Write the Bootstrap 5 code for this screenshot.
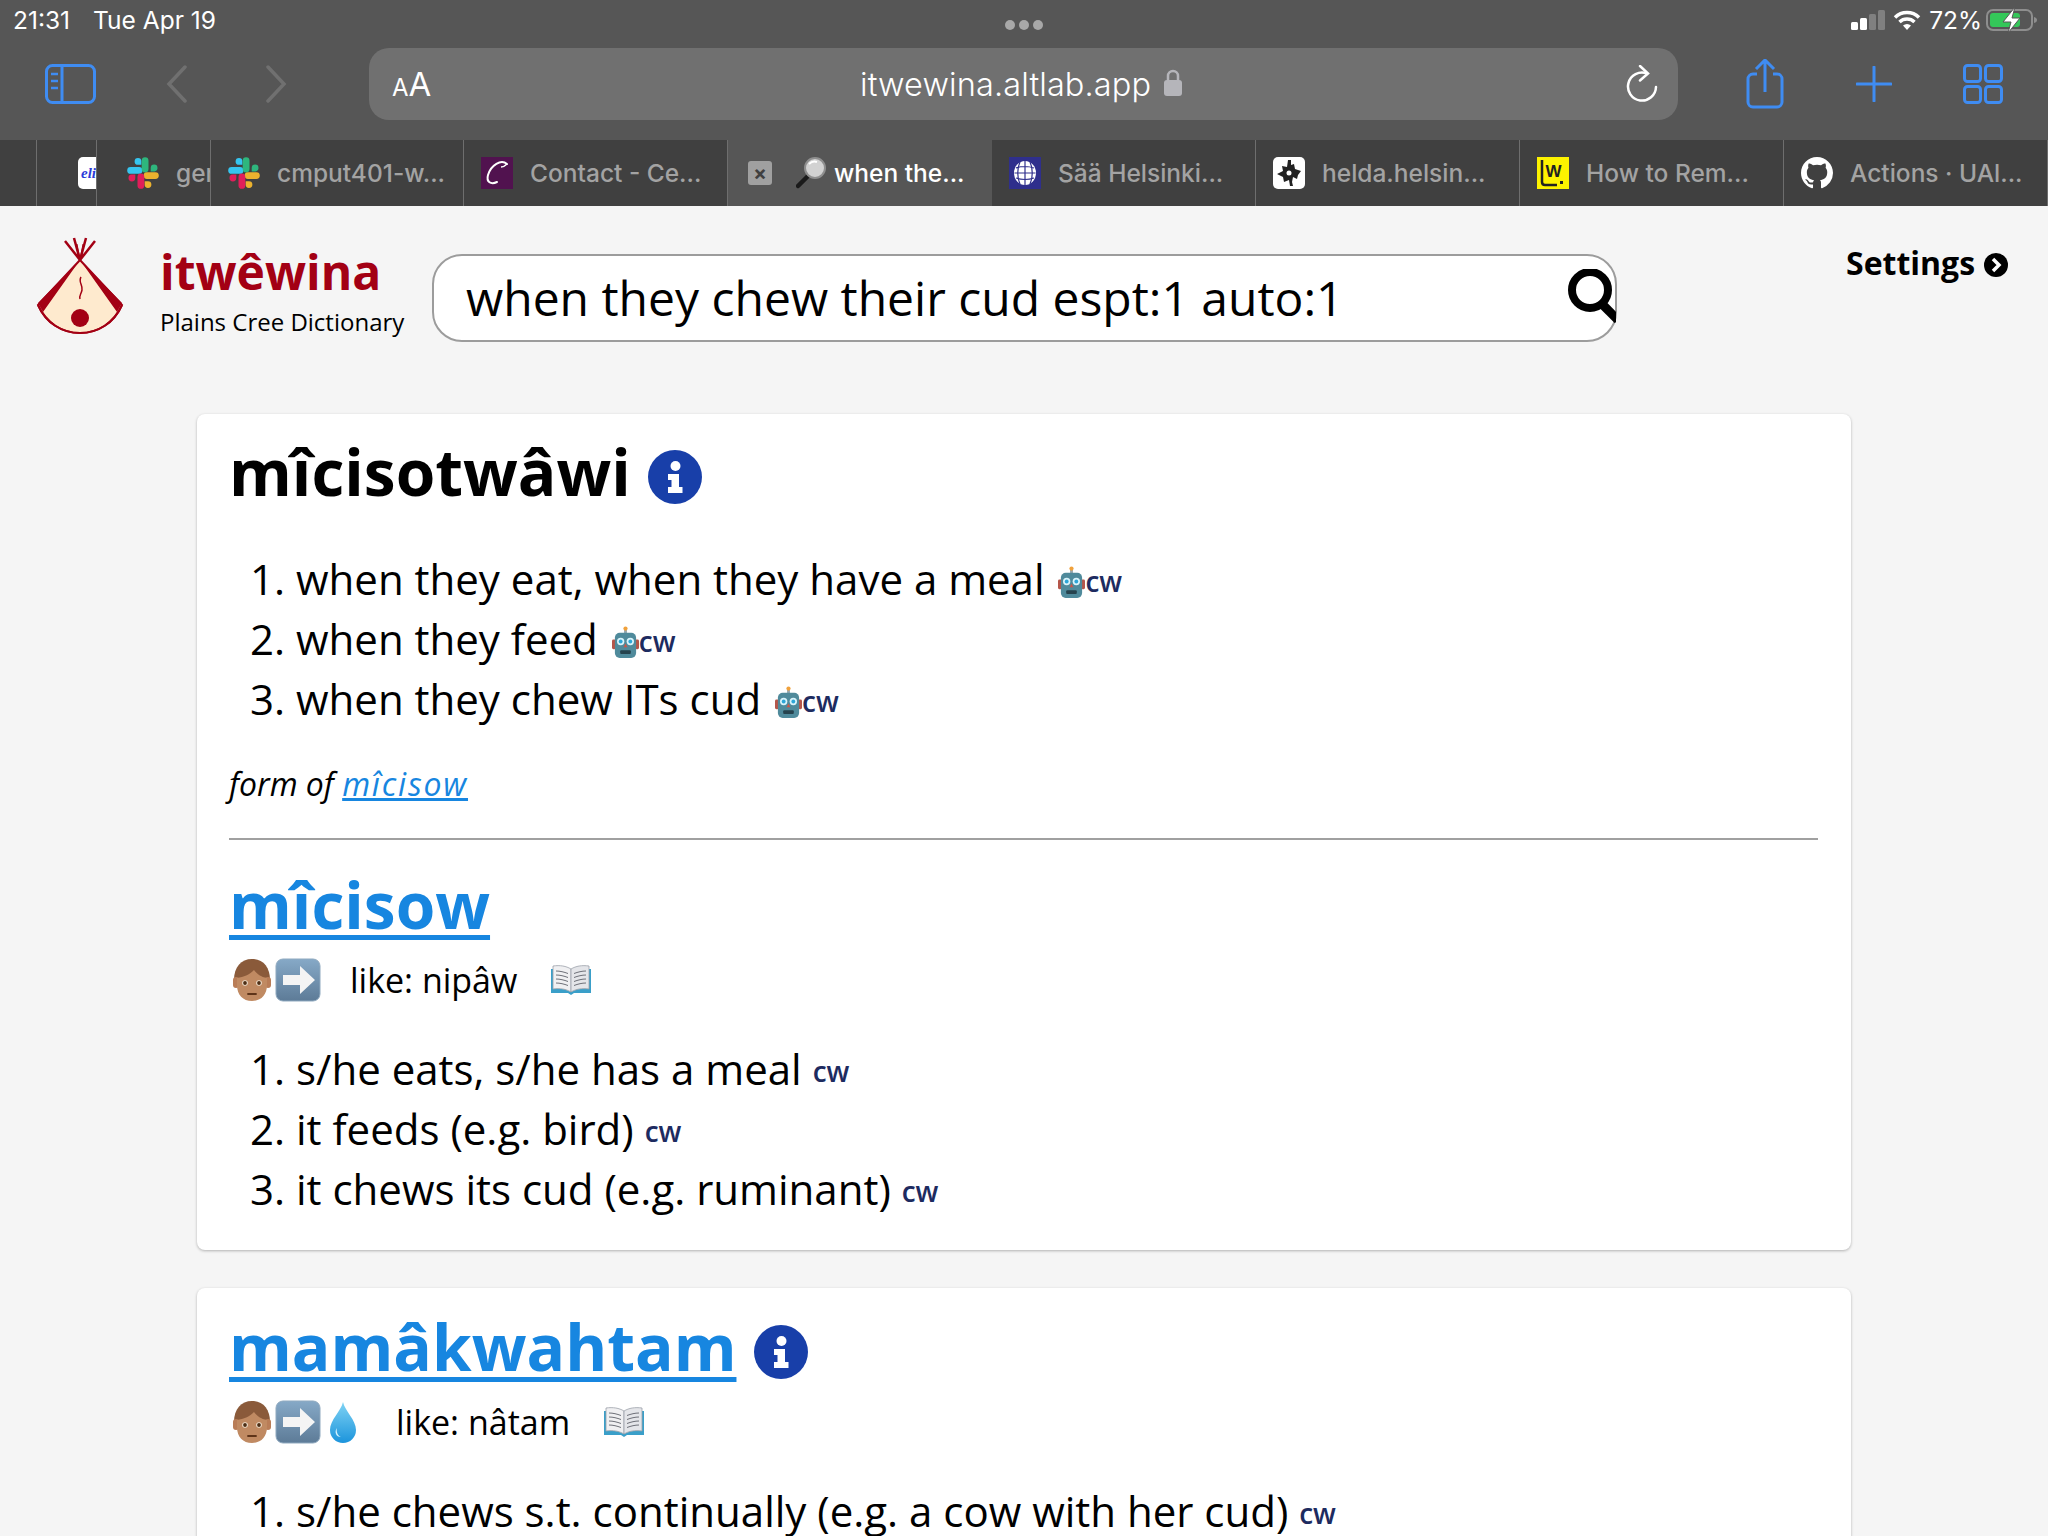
<!DOCTYPE html>
<html lang="en">
<head>
<meta charset="UTF-8">
<meta name="viewport" content="width=device-width, initial-scale=1.0">
<title>itwêwina</title>
<link href="https://cdn.jsdelivr.net/npm/bootstrap@5.3.3/dist/css/bootstrap.min.css" rel="stylesheet">
<style>
html, body { height: 1536px; overflow: hidden; }
body { background: #f5f5f5; font-family: "Open Sans", "Liberation Sans", sans-serif; color: #000; }
.chrome { background: #565656; font-family: Inter, "Liberation Sans", sans-serif; }
.status-bar { height: 48px; color: #fff; font-size: 24.500px; padding: 0 10px 8px 13px; position: relative; }
.status-bar .st-time { margin-right: 23px; }
.dots { position: absolute; left: 1005px; top: 20px; gap: 4px; }
.dots span { width: 10px; height: 10px; border-radius: 50%; background: #a8a8a8; }
.toolbar { height: 92px; padding-bottom: 20px; }
.tool-side { margin-left: 45px; }
.tool-back { margin-left: 70px; }
.tool-fwd { margin-left: 79px; }
.url-bar { margin-left: 82px; width: 1309px; height: 72px; background: #707070; border-radius: 20px; position: relative; color: #fff; padding: 0 20px 0 23px; }
.url-aa { font-size: 33px; line-height: 1; width: 40px; }
.url-aa small { font-size: 24px; }
.url-host { position: absolute; left: 491px; top: 15px; font-size: 32.500px; line-height: 44px; font-weight: 300; letter-spacing: .1px; }
.url-lock { position: absolute; left: 795px; top: 21px; }
.tool-share { margin-left: 68px; }
.tool-plus { margin-left: 72px; }
.tool-tabs { margin-left: 71px; }
.tabstrip { height: 66px; background: #404040; color: #a3a3a3; font-size: 24.500px; font-weight: 500; }
.tabcell { flex: none; width: 264px; height: 66px; padding-left: 17px; border-right: 1px solid #6e6e6e; overflow: hidden; white-space: nowrap; gap: 17px; }
.tabcell svg { flex: none; }
.tab-0 { width: 37px; padding: 0; }
.tab-1 { width: 60px; padding-left: 41px; }
.tab-2 { width: 114px; gap: 17px; padding-left: 30px; }
.tab-3 { width: 253px; }
.tab-on { background: #565656; color: #fff; border-right: 0; padding-left: 20px; gap: 0; width: 264px; }
.tab-on .tab-x { width: 24px; height: 24px; background: #a0a0a0; color: #404040; font-size: 20px; line-height: 24px; text-align: center; border-radius: 3px; margin-right: 24px; font-weight: 700; }
.tab-on svg { margin-right: 8px; }
.site-head { height: 208px; position: relative; padding: 0; }
.logo-box { margin: 30px 0 0 36px; }
.brand-box { margin: 32px 0 0 36px; width: 272px; }
.brand-name { color: #a30014; font-weight: 700; font-size: 48px; line-height: 68px; }
.brand-sub { font-size: 24px; line-height: 32px; }
.search-box { margin: 48px 0 0 0; width: 1185px; height: 88px; border: 2px solid #9c9c9c; border-radius: 30px; background: #fff; padding-left: 32px; position: relative; font-size: 48px; line-height: 84px; }
.search-ic { position: absolute; right: -1px; top: 13px; }
.settings-link { position: absolute; left: 1846px; top: 35px; font-weight: 700; font-size: 32px; line-height: 44px; gap: 9px; color: #000; text-decoration: none; }
.entry { margin: 0 197px; border: 0; border-radius: 8px; background: #fff; box-shadow: 0 1px 3px rgba(0,0,0,.28); padding: 0 33px 0 32px; }
.entry + .entry { margin-top: 38px; }
.entry-1 { height: 836px; }
.entry-2 { height: 400px; }
.word { font-size: 64px; font-weight: 700; line-height: 87px; margin: 0; gap: 17px; }
.word a, .form-note a { color: #1786e0; }
.word a { text-decoration-thickness: 5px; text-underline-offset: 6px; }
.info-ic { margin-top: 11px; }
.first-word { padding-top: 14px; }
.senses { font-size: 42px; line-height: 60px; margin: 0; padding-left: 67px; }
.senses li { white-space: nowrap; }
.senses svg { vertical-align: -4px; margin-left: 3px; }
.cw-tag { color: #1d2b60; font-size: 28px; font-weight: 600; line-height: 1; vertical-align: 3px; }
.senses-a { margin-top: 34px; }
.senses-b { margin-top: 34px; }
.form-note { font-style: italic; font-size: 32px; line-height: 46px; margin: 32px 0 0 0; }
.form-note a { letter-spacing: 1.800px; text-decoration-thickness: 3px; }
.rule { height: 2px; background: #a0a0a0; margin: 31px 0 0 0; }
.word-second { margin-top: 21px; }
.meta-row { height: 50px; font-size: 34px; gap: 0; margin-top: 7px; }
.meta-like { margin-left: 29px; margin-right: 31px; }
.meta-row svg { flex: none; margin-left: 2px; }
.person-ic { margin-left: 3px !important; }
.arrow-ic { margin-left: 3px !important; }
.meta-row .drop-ic { margin-left: 8px; }
.drop-ic + .meta-like { margin-left: 39px; }
.word-third { padding-top: 15px; }
.word-third .word-gap { margin-left: 1px; }
</style>
</head>
<body>
<svg width="0" height="0" class="position-absolute" aria-hidden="true">
  <defs>
    <linearGradient id="bluebox" x1="0" y1="0" x2="0" y2="1"><stop offset="0" stop-color="#86a9c7"/><stop offset="1" stop-color="#5d7b97"/></linearGradient>
    <linearGradient id="dropg" x1="0" y1="0" x2="0" y2="1"><stop offset="0" stop-color="#7fd3f4"/><stop offset="1" stop-color="#1c94dc"/></linearGradient>
    <symbol id="sl" viewBox="0 0 32 32">
      <path d="M11 1a3.4 3.4 0 0 0 0 6.8h3.4V4.4A3.4 3.4 0 0 0 11 1zM3.6 10a3.4 3.4 0 0 0 0 6.8H12A3.4 3.4 0 0 0 12 10z" fill="#36c5f0"/>
      <path d="M29 11a3.4 3.4 0 0 0-6.8 0v3.4H26A3.4 3.4 0 0 0 29 11zM20 3.6a3.4 3.4 0 0 0-6.8 0V12a3.4 3.4 0 0 0 6.8 0z" fill="#2eb67d" transform="translate(1.5 0)"/>
      <path d="M21 31a3.4 3.4 0 0 0 0-6.8h-3.4v3.4A3.4 3.4 0 0 0 21 31zM28.4 22a3.4 3.4 0 0 0 0-6.8H20a3.4 3.4 0 0 0 0 6.8z" fill="#ecb22e"/>
      <path d="M3 21a3.4 3.4 0 0 0 6.8 0v-3.4H6A3.4 3.4 0 0 0 3 21zM12 28.4a3.4 3.4 0 0 0 6.8 0V20a3.4 3.4 0 0 0-6.8 0z" fill="#e01e5a" transform="translate(-1.5 0)"/>
    </symbol>
    <symbol id="robot" viewBox="0 0 28 34">
      <rect x="12.500" y="2" width="3" height="6" fill="#9aa7ad"/><circle cx="14" cy="2.500" r="2.200" fill="#f0a13c"/>
      <rect x="0" y="14" width="4" height="10" rx="1.500" fill="#b5564a"/><rect x="24" y="14" width="4" height="10" rx="1.500" fill="#b5564a"/>
      <path d="M3 12a5 5 0 0 1 5-5h12a5 5 0 0 1 5 5v16a5 5 0 0 1-5 5H8a5 5 0 0 1-5-5z" fill="#4f8a9b"/>
      <circle cx="9" cy="16" r="3.800" fill="#d9f3fa"/><circle cx="19" cy="16" r="3.800" fill="#d9f3fa"/>
      <circle cx="9" cy="16" r="2" fill="#2da6d8"/><circle cx="19" cy="16" r="2" fill="#2da6d8"/>
      <path d="M14 18l2 4h-4z" fill="#c9574a"/><rect x="8.500" y="25" width="11" height="4" rx="1" fill="#26434e"/>
    </symbol>
    <symbol id="person" viewBox="0 0 40 44">
      <path d="M2 22C2 9 9 1 20 1s18 8 18 21v5H2z" fill="#8a5a3a"/>
      <rect x="1" y="19" width="6" height="11" rx="3" fill="#b97d57"/><rect x="33" y="19" width="6" height="11" rx="3" fill="#b97d57"/>
      <path d="M5 20c7-1 12-3 17-8 3 4 7 7 13 8v7c0 10-6 16-15 16S5 37 5 27z" fill="#c08a62"/>
      <circle cx="13" cy="25" r="2.800" fill="#f3e7d7"/><circle cx="27" cy="25" r="2.800" fill="#f3e7d7"/>
      <circle cx="13" cy="25" r="1.900" fill="#4d2e14"/><circle cx="27" cy="25" r="1.900" fill="#4d2e14"/>
      <path d="M16 36h8" stroke="#5e3419" stroke-width="1.800" stroke-linecap="round"/>
    </symbol>
    <symbol id="arrowbox" viewBox="0 0 46 44">
      <rect x="1" y="1" width="44" height="42" rx="7" fill="url(#bluebox)" stroke="#8fa9bf" stroke-width="1"/>
      <path d="M8 17h17V8l15 14-15 14v-9H8z" fill="#f4f4f4"/>
    </symbol>
    <symbol id="book" viewBox="0 0 42 32">
      <path d="M1 5h40v24H24l-3 2-3-2H1z" fill="#3a9fc9"/>
      <path d="M3 2c7-1 13 0 18 3v23c-5-3-11-4-18-3z" fill="#f0f0f2" stroke="#9aa0a8" stroke-width=".8"/>
      <path d="M39 2c-7-1-13 0-18 3v23c5-3 11-4 18-3z" fill="#e4e5e9" stroke="#9aa0a8" stroke-width=".8"/>
      <path d="M6 7c4 0 8 1 12 2.500M6 11c4 0 8 1 12 2.500M6 15c4 0 8 1 12 2.500M6 19c4 0 8 1 12 2.500M36 7c-4 0-8 1-12 2.500M36 11c-4 0-8 1-12 2.500M36 15c-4 0-8 1-12 2.500M36 19c-4 0-8 1-12 2.500" stroke="#6e7078" stroke-width="1" fill="none"/>
    </symbol>
    <symbol id="drop" viewBox="0 0 28 42">
      <path d="M14 1c2 9 13 18 13 28a13 13 0 0 1-26 0C1 19 12 10 14 1z" fill="url(#dropg)"/>
      <path d="M8 27c-1 4 1 8 4 9-5 0-7-5-4-9z" fill="#d5f2fc"/>
    </symbol>
    <symbol id="info" viewBox="0 0 54 54">
      <circle cx="27" cy="27" r="27" fill="#183fa9"/>
      <circle cx="27.500" cy="16" r="5" fill="#fff"/>
      <path d="M20 24h11v13h3.500v6H20v-6h3.500v-7H20z" fill="#fff"/>
    </symbol>
  </defs>
</svg>

<div class="chrome">
  <div class="status-bar d-flex align-items-center justify-content-between">
    <div><span class="st-time">21:31</span><span>Tue Apr 19</span></div>
    <div class="dots d-flex"><span></span><span></span><span></span></div>
    <div class="d-flex align-items-center">
      <svg width="34" height="22" viewBox="0 0 34 22" class="me-2"><rect x="0" y="13" width="7" height="8" rx="1.500" fill="#fff"/><rect x="9" y="9" width="7" height="12" rx="1.500" fill="#fff"/><rect x="18" y="5" width="7" height="16" rx="1.500" fill="#808080"/><rect x="27" y="1" width="7" height="20" rx="1.500" fill="#808080"/></svg>
      <svg width="28" height="22" viewBox="0 0 28 22" class="me-2"><path d="M2 8.500a17 17 0 0 1 24 0M6.500 13a11 11 0 0 1 15 0" fill="none" stroke="#fff" stroke-width="3.500"/><path d="M10 16.500a6 6 0 0 1 8 0L14 21z" fill="#fff"/></svg>
      <span class="me-1">72%</span>
      <svg width="52" height="26" viewBox="0 0 52 26"><rect x="1" y="3" width="45" height="20" rx="6" fill="none" stroke="#8e8e8e" stroke-width="2"/><rect x="4" y="6" width="30" height="14" rx="3" fill="#34c759"/><path d="M48 10c2 .5 3 1.500 3 3s-1 2.500-3 3z" fill="#8e8e8e"/><path d="M29 0 17 15h8l-3 11 12-15h-8z" fill="#fff" stroke="#565656" stroke-width="1"/></svg>
    </div>
  </div>
  <div class="toolbar d-flex align-items-center">
    <svg class="tool-side" width="51" height="40" viewBox="0 0 51 40"><rect x="1.500" y="1.500" width="48" height="37" rx="6" fill="none" stroke="#3f8cf2" stroke-width="3"/><path d="M17 2v36" stroke="#3f8cf2" stroke-width="3"/><path d="M6 10h7M6 17h7M6 24h7" stroke="#3f8cf2" stroke-width="2.500"/></svg>
    <svg class="tool-back" width="21" height="38" viewBox="0 0 21 38"><path d="M19 2 3 19l16 17" fill="none" stroke="#707070" stroke-width="3.500" stroke-linecap="round"/></svg>
    <svg class="tool-fwd" width="21" height="38" viewBox="0 0 21 38"><path d="M2 2l16 17L2 36" fill="none" stroke="#707070" stroke-width="3.500" stroke-linecap="round"/></svg>
    <div class="url-bar d-flex align-items-center justify-content-between">
      <div class="url-aa"><small>A</small>A</div>
      <div class="url-host">itwewina.altlab.app</div>
      <svg class="url-lock" width="18" height="27" viewBox="0 0 18 27"><rect x="0" y="11" width="18" height="16" rx="3" fill="#b5b5ba"/><path d="M4 12V7a5 5 0 0 1 10 0v5" fill="none" stroke="#b5b5ba" stroke-width="2.500"/></svg>
      <svg width="32" height="38" viewBox="0 0 32 38"><path d="M21 8.500A14 14 0 1 0 30 22" fill="none" stroke="#fff" stroke-width="2.500" stroke-linecap="round"/><path d="M14 1l8 7.500-8 7" fill="none" stroke="#fff" stroke-width="2.500" stroke-linecap="round"/></svg>
    </div>
    <svg class="tool-share" width="38" height="50" viewBox="0 0 38 50"><path d="M11 15H7a5 5 0 0 0-5 5v23a5 5 0 0 0 5 5h24a5 5 0 0 0 5-5V20a5 5 0 0 0-5-5h-4" fill="none" stroke="#3f8cf2" stroke-width="3"/><path d="M19 33V2M10 10l9-9 9 9" fill="none" stroke="#3f8cf2" stroke-width="3"/></svg>
    <svg class="tool-plus" width="36" height="36" viewBox="0 0 36 36"><path d="M18 1v34M1 18h34" stroke="#3f8cf2" stroke-width="3" stroke-linecap="round"/></svg>
    <svg class="tool-tabs" width="40" height="40" viewBox="0 0 40 40"><rect x="1.500" y="1.500" width="16" height="16" rx="3" fill="none" stroke="#3f8cf2" stroke-width="3"/><rect x="22.500" y="1.500" width="16" height="16" rx="3" fill="none" stroke="#3f8cf2" stroke-width="3"/><rect x="1.500" y="22.500" width="16" height="16" rx="3" fill="none" stroke="#3f8cf2" stroke-width="3"/><rect x="22.500" y="22.500" width="16" height="16" rx="3" fill="none" stroke="#3f8cf2" stroke-width="3"/></svg>
  </div>
  <div class="tabstrip d-flex">
    <div class="tabcell tab-0"></div>
    <div class="tabcell tab-1 d-flex align-items-center"><svg width="32" height="32" viewBox="0 0 32 32"><rect width="32" height="32" rx="5" fill="#fff"/><text x="3" y="21" font-size="15" font-style="italic" font-weight="700" fill="#2a3bd8" font-family="Liberation Serif">eli</text></svg></div>
    <div class="tabcell tab-2 d-flex align-items-center"><svg width="32" height="32"><use href="#sl"/></svg><span>general</span></div>
    <div class="tabcell tab-3 d-flex align-items-center"><svg width="32" height="32"><use href="#sl"/></svg><span>cmput401-w...</span></div>
    <div class="tabcell d-flex align-items-center"><svg width="32" height="32" viewBox="0 0 32 32"><rect width="32" height="32" fill="#51124f"/><path d="M26 7C20 2 10 8 7 18c-2 7 3 10 9 7" fill="none" stroke="#fff" stroke-width="2" stroke-linecap="round"/><path d="M26 7c-2 2-4 3-6 3" fill="none" stroke="#fff" stroke-width="1.500"/></svg><span>Contact - Ce...</span></div>
    <div class="tabcell tab-on d-flex align-items-center"><span class="tab-x">×</span><svg width="30" height="32" viewBox="0 0 30 32"><path d="M12 19 2 29" stroke="#1a1a1a" stroke-width="4.500" stroke-linecap="round"/><circle cx="19" cy="11" r="10" fill="#d2d2d2" stroke="#8f8f8f" stroke-width="2"/><path d="M13 7c2-2 5-3 8-2" stroke="#fff" stroke-width="2" fill="none"/></svg><span>when the...</span></div>
    <div class="tabcell d-flex align-items-center"><svg width="32" height="32" viewBox="0 0 32 32"><rect width="32" height="32" fill="#2f2f8c"/><ellipse cx="16" cy="16" rx="11" ry="12" fill="#fff"/><path d="M5.500 16h21M7 11c6-2 12-2 18 0M7 21c6 2 12 2 18 0M16 4v24M11 5c-3 6-3 16 0 22M21 5c3 6 3 16 0 22" stroke="#2f2f8c" stroke-width="1.200" fill="none"/></svg><span>Sää Helsinki...</span></div>
    <div class="tabcell d-flex align-items-center"><svg width="32" height="32" viewBox="0 0 32 32"><rect width="32" height="32" rx="5" fill="#fff"/><path d="M15 3h3v5l3-1 1 5 6 2-3 4-1 4-4-2-1 5 1 4h-3l-1-6-5 2-1-5-6-3 6-3-1-5 5 1z" fill="#222"/><circle cx="16" cy="16" r="2.500" fill="#fff"/></svg><span>helda.helsin...</span></div>
    <div class="tabcell d-flex align-items-center"><svg width="32" height="32" viewBox="0 0 32 32"><rect width="32" height="32" fill="#fdf300"/><path d="M5 3v22q0 3 3 3h12" fill="none" stroke="#222" stroke-width="2.500"/><text x="8.500" y="20" font-size="17" font-weight="700" fill="#222" font-family="Liberation Sans">W</text><rect x="23" y="24" width="3" height="3" fill="#222"/></svg><span>How to Rem...</span></div>
    <div class="tabcell d-flex align-items-center"><svg width="32" height="32" viewBox="0 0 16 16"><path fill="#fff" d="M8 0C3.58 0 0 3.58 0 8c0 3.54 2.29 6.53 5.47 7.59.4.07.55-.17.55-.38 0-.19-.01-.82-.01-1.49-2.01.37-2.53-.49-2.69-.94-.09-.23-.48-.94-.82-1.13-.28-.15-.68-.52-.01-.53.63-.01 1.08.58 1.23.82.72 1.21 1.87.87 2.33.66.07-.52.28-.87.51-1.07-1.78-.2-3.64-.89-3.64-3.95 0-.87.31-1.59.82-2.15-.08-.2-.36-1.02.08-2.12 0 0 .67-.21 2.2.82.64-.18 1.32-.27 2-.27.68 0 1.36.09 2 .27 1.53-1.04 2.2-.82 2.2-.82.44 1.1.16 1.92.08 2.12.51.56.82 1.27.82 2.15 0 3.07-1.87 3.75-3.65 3.95.29.25.54.73.54 1.48 0 1.07-.01 1.93-.01 2.2 0 .21.15.46.55.38A8.013 8.013 0 0016 8c0-4.42-3.58-8-8-8z"/></svg><span>Actions · UAl...</span></div>
  </div>
</div>

<header class="site-head d-flex">
  <svg class="logo-box" width="88" height="100" viewBox="0 0 88 100">
    <path d="M44 24 2 69c8 18 24 28 42 28s34-10 42-28z" fill="#feeace" stroke="#a30014" stroke-width="2"/>
    <path d="M44 24 7 76l-5-9zM44 24l37 52 5-9z" fill="#a30014"/>
    <path d="M2 69c8 18 24 28 42 28s34-10 42-28" fill="none" stroke="#a30014" stroke-width="2"/>
    <circle cx="44" cy="82" r="9" fill="#a30014"/>
    <path d="M45 41c-3 5 2 8 1 13s-3 5-2 9" fill="none" stroke="#a30014" stroke-width="1.500"/>
    <path d="M44 24 29 5M44 24 38 2M44 24l6-22M44 24 59 5" stroke="#a30014" stroke-width="2.500"/>
    <path d="M44 24 41 8M44 24l3-16" stroke="#a30014" stroke-width="1"/>
  </svg>
  <div class="brand-box">
    <div class="brand-name">itwêwina</div>
    <div class="brand-sub">Plains Cree Dictionary</div>
  </div>
  <div class="search-box">when they chew their cud espt:1 auto:1
    <svg class="search-ic" width="48" height="54" viewBox="0 0 48 54"><circle cx="22" cy="21" r="18" fill="none" stroke="#000" stroke-width="8"/><path d="M35 36 50 51" stroke="#000" stroke-width="9"/></svg>
  </div>
  <a class="settings-link d-flex align-items-center" href="#">Settings <svg width="24" height="24" viewBox="0 0 24 24" class="mt-1"><circle cx="12" cy="12" r="12" fill="#000"/><path d="M9 6l6 6-6 6" fill="none" stroke="#fff" stroke-width="3.500"/></svg></a>
</header>

<main>
  <section class="card entry entry-1">
    <h1 class="word first-word d-flex align-items-center">mîcisotwâwi <svg width="54" height="54" class="info-ic"><use href="#info"/></svg></h1>
    <ol class="senses senses-a">
      <li>when they eat, when they have a meal <svg width="27" height="33"><use href="#robot"/></svg><span class="cw-tag">cw</span></li>
      <li>when they feed <svg width="27" height="33"><use href="#robot"/></svg><span class="cw-tag">cw</span></li>
      <li>when they chew ITs cud <svg width="27" height="33"><use href="#robot"/></svg><span class="cw-tag">cw</span></li>
    </ol>
    <p class="form-note">form of <a href="#">mîcisow</a></p>
    <div class="rule"></div>
    <h2 class="word word-second"><a href="#">mîcisow</a></h2>
    <div class="meta-row d-flex align-items-center">
      <svg class="person-ic" width="40" height="44"><use href="#person"/></svg>
      <svg class="arrow-ic" width="46" height="44"><use href="#arrowbox"/></svg>
      <span class="meta-like">like: nipâw</span>
      <svg width="42" height="32"><use href="#book"/></svg>
    </div>
    <ol class="senses senses-b">
      <li>s/he eats, s/he has a meal <span class="cw-tag">cw</span></li>
      <li>it feeds (e.g. bird) <span class="cw-tag">cw</span></li>
      <li>it chews its cud (e.g. ruminant) <span class="cw-tag">cw</span></li>
    </ol>
  </section>
  <section class="card entry entry-2">
    <h2 class="word word-third d-flex align-items-center"><a href="#">mamâkwahtam</a> <svg width="54" height="54" class="info-ic word-gap"><use href="#info"/></svg></h2>
    <div class="meta-row d-flex align-items-center">
      <svg class="person-ic" width="40" height="44"><use href="#person"/></svg>
      <svg class="arrow-ic" width="46" height="44"><use href="#arrowbox"/></svg>
      <svg class="drop-ic" width="28" height="42"><use href="#drop"/></svg>
      <span class="meta-like">like: nâtam</span>
      <svg width="42" height="32"><use href="#book"/></svg>
    </div>
    <ol class="senses senses-b">
      <li>s/he chews s.t. continually (e.g. a cow with her cud) <span class="cw-tag">cw</span></li>
    </ol>
  </section>
</main>
</body>
</html>
